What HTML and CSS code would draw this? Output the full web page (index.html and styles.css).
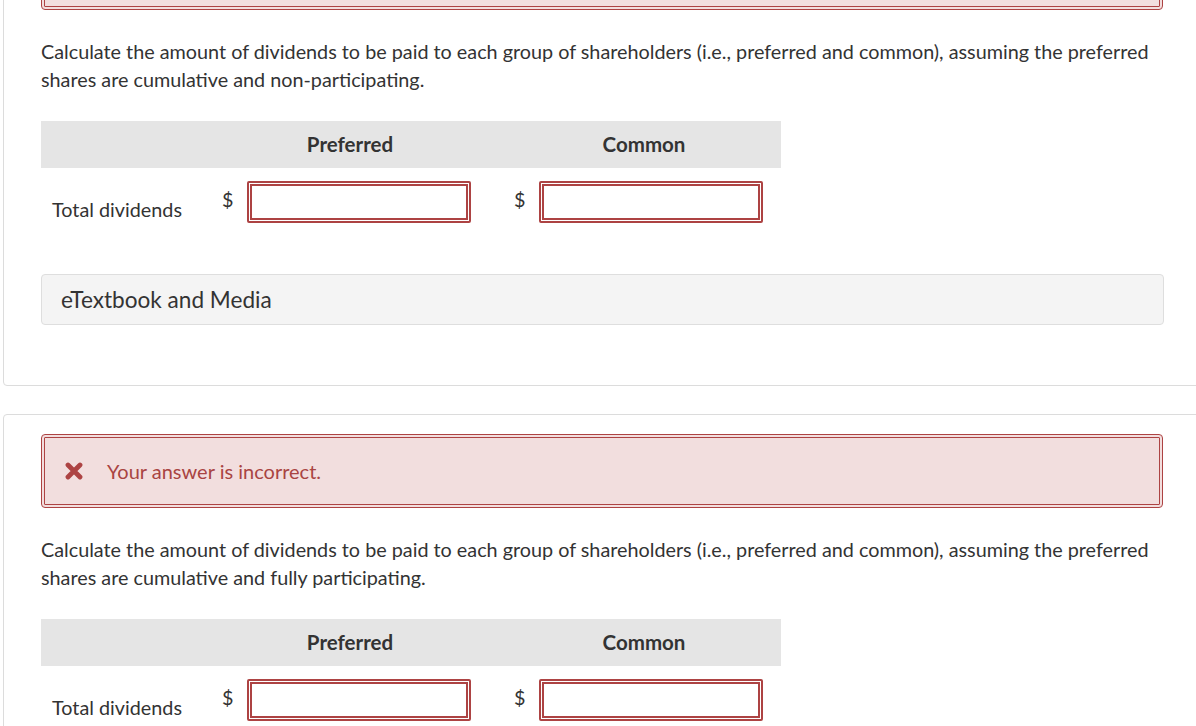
FILE: index.html
```html
<!DOCTYPE html>
<html lang="en">
<head>
  <meta charset="UTF-8" />
  <meta name="viewport" content="width=device-width, initial-scale=1.0" />
  <title>Dividends</title>
  <link rel="stylesheet" href="styles.css">
</head>
<body>
  <div class="page">
    <div class="card">
      <div class="feedback">
        <svg class="x-icon" viewBox="0 0 18 18" width="18" height="18">
          <path d="M3 3 L15 15 M15 3 L3 15" />
        </svg>
        <span>Your answer is incorrect.</span>
      </div>
      <p class="question">Calculate the amount of dividends to be paid to each group of shareholders (i.e., preferred and common), assuming the preferred shares are cumulative and non-participating.</p>
      <div class="answer-table">
        <div class="head"></div>
        <div class="head">Preferred</div>
        <div class="head common">Common</div>
        <div class="label">Total dividends</div>
        <div class="cell first"><span class="dollar">$</span><input type="text" class="answer" /></div>
        <div class="cell second"><span class="dollar">$</span><input type="text" class="answer" /></div>
      </div>
      <div class="media">eTextbook and Media</div>
    </div>

    <div class="card">
      <div class="feedback">
        <svg class="x-icon" viewBox="0 0 18 18" width="18" height="18">
          <path d="M3 3 L15 15 M15 3 L3 15" />
        </svg>
        <span>Your answer is incorrect.</span>
      </div>
      <p class="question">Calculate the amount of dividends to be paid to each group of shareholders (i.e., preferred and common), assuming the preferred shares are cumulative and fully participating.</p>
      <div class="answer-table">
        <div class="head"></div>
        <div class="head">Preferred</div>
        <div class="head common">Common</div>
        <div class="label">Total dividends</div>
        <div class="cell first"><span class="dollar">$</span><input type="text" class="answer" /></div>
        <div class="cell second"><span class="dollar">$</span><input type="text" class="answer" /></div>
      </div>
      <div class="media">eTextbook and Media</div>
    </div>
  </div>
</body>
</html>
```

FILE: styles.css
```css
* {
  margin: 0;
  padding: 0;
  box-sizing: border-box;
}
body {
  background: #fff;
  font-family: Lato, 'Open Sans', sans-serif;
  color: #333;
  overflow: hidden;
}
.page {
  margin-top: -84px;
  margin-left: 3px;
  width: 1198px;
}
.card {
  border: 1px solid #dcdcdc;
  border-radius: 4px;
  padding: 19px 37px 60px;
  margin-bottom: 28px;
}
.feedback {
  display: flex;
  align-items: center;
  height: 74px;
  padding-left: 20px;
  background: #f2dede;
  border: 4px double #ad4343;
  border-radius: 4px;
  color: #a94442;
  font-size: 20px;
}
.x-icon {
  margin-right: 24px;
}
.x-icon path {
  stroke: #ad4343;
  stroke-width: 4.8;
  stroke-linecap: round;
  fill: none;
}
.question {
  margin: 28px 0 28px;
  font-size: 19.8px;
  line-height: 27.5px;
}
.answer-table {
  display: grid;
  grid-template-columns: 164px 290px 286px;
  width: 740px;
}
.head {
  height: 47px;
  line-height: 47px;
  background: #e5e5e5;
  text-align: center;
  font-weight: 700;
  font-size: 20.5px;
}
.head.common {
  padding-left: 12px;
}
.label {
  padding: 28px 0 0 11px;
  font-size: 19.8px;
  line-height: 27px;
  height: 67px;
}
.cell {
  display: flex;
  align-items: flex-start;
  padding-top: 13px;
}
.cell.first {
  padding-left: 17px;
}
.cell.second {
  padding-left: 19px;
}
.dollar {
  width: 25px;
  padding-top: 5px;
  font-size: 19.8px;
  line-height: 27px;
}
.answer {
  width: 224px;
  height: 42px;
  border: 5px double #ad4343;
  border-radius: 2px;
  background: #fff;
  font-family: inherit;
  font-size: 16px;
  padding: 0 6px;
}
.media {
  margin-top: 39px;
  height: 51px;
  line-height: 49px;
  padding-left: 19px;
  background: #f4f4f4;
  border: 1px solid #dedede;
  border-radius: 4px;
  font-size: 22.6px;
  width: 1123px;
}
```
